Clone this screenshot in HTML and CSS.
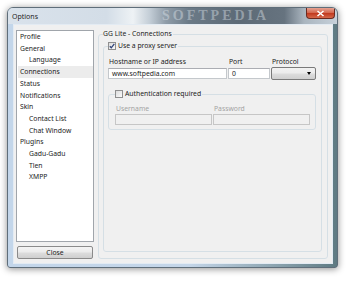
FILE: index.html
```html
<!DOCTYPE html>
<html lang="en">
<head>
  <meta charset="UTF-8">
  <meta name="viewport" content="width=device-width, initial-scale=1.0">
  <title>Options</title>
  <link rel="stylesheet" href="styles.css">
</head>
<body>
  <div class="window">
    <div class="titlebar">
      <span class="title">Options</span>
      <span class="watermark">SOFTPEDIA</span>
      <span class="close-x">
        <svg width="9" height="7" viewBox="0 0 9 7"><path d="M1.5 1 L7.5 6 M7.5 1 L1.5 6" stroke="#fff" stroke-width="1.6"/></svg>
      </span>
    </div>

    <div class="client">
      <div class="sidebar">
        <ul class="nav">
          <li>Profile</li>
          <li>General</li>
          <li class="sub">Language</li>
          <li class="active">Connections</li>
          <li>Status</li>
          <li>Notifications</li>
          <li>Skin</li>
          <li class="sub">Contact List</li>
          <li class="sub">Chat Window</li>
          <li>Plugins</li>
          <li class="sub">Gadu-Gadu</li>
          <li class="sub">Tlen</li>
          <li class="sub">XMPP</li>
        </ul>
        <button class="btn">Close</button>
      </div>

      <fieldset class="page">
        <legend>GG Lite - Connections</legend>

        <fieldset class="group proxy">
          <legend class="check">
            <span class="box checked">
              <svg width="6" height="6" viewBox="0 0 6 6"><path d="M0.8 3.2 L2.3 4.8 L5.3 0.8" fill="none" stroke="#32457a" stroke-width="1.3"/></svg>
            </span>
            Use a proxy server
          </legend>

          <div class="row server">
            <div class="field">
              <span class="label">Hostname or IP address</span>
              <div class="edit">www.softpedia.com</div>
            </div>
            <div class="field">
              <span class="label">Port</span>
              <div class="edit">0</div>
            </div>
            <div class="field">
              <span class="label">Protocol</span>
              <div class="combo"><span class="arrow"></span></div>
            </div>
          </div>

          <fieldset class="group auth">
            <legend class="check">
              <span class="box"></span>
              Authentication required
            </legend>
            <div class="row login">
              <div class="field">
                <span class="label disabled">Username</span>
                <div class="edit disabled"></div>
              </div>
              <div class="field">
                <span class="label disabled">Password</span>
                <div class="edit disabled"></div>
              </div>
            </div>
          </fieldset>
        </fieldset>
      </fieldset>
    </div>
  </div>
</body>
</html>
```

FILE: styles.css
```css
* {
  box-sizing: border-box;
}
body {
  margin: 0;
  width: 350px;
  height: 281px;
  background: #fff;
  font-family: "Noto Sans", "Liberation Sans", sans-serif;
  font-size: 6.8px;
  color: #1b1b1b;
  overflow: hidden;
}
.window {
  width: 331px;
  height: 261px;
  margin: 7px 0 0 7px;
  padding-bottom: 3px;
  border: 1px solid #5f6e7a;
  border-radius: 6px 6px 3px 3px;
  background: linear-gradient(90deg, #c3d6ea 0%, #c4d6e9 55%, #8ea6b2 80%, #5e7a82 100%);
  box-shadow: 0 1px 7px rgba(0, 0, 0, 0.45);
  display: flex;
  flex-direction: column;
  overflow: hidden;
}
.titlebar {
  height: 16px;
  display: flex;
  align-items: center;
  padding-left: 4px;
  background: linear-gradient(90deg, #d9e2eb 0%, #d3dde7 30%, #eef2f5 38%, #c4ced7 43%, #8f9ca8 48%, #6b7a87 55%, #5d6a76 70%, #66737f 84%, #aab5bf 90%, #c7d1da 100%);
}
.title {
  color: #1e1e1e;
  font-size: 7px;
}
.watermark {
  margin-left: 124px;
  font-family: "Liberation Serif", serif;
  font-weight: bold;
  font-size: 14px;
  letter-spacing: 3px;
  color: rgba(225, 232, 238, 0.42);
}
.close-x {
  margin-left: auto;
  margin-right: 2px;
  align-self: flex-start;
  width: 29px;
  height: 11px;
  border: 1px solid #6b2a20;
  border-top: none;
  border-radius: 0 0 4px 4px;
  background: linear-gradient(#e6a393 0%, #d56a52 45%, #c23b20 55%, #d5684a 100%);
  display: flex;
  align-items: center;
  justify-content: center;
}
.client {
  flex: 1;
  margin: 0 4px 0 5px;
  padding: 4px 4px 4px 2px;
  border: 1px solid #e3ebf3;
  background: #f0f0f0;
  display: flex;
  gap: 4px;
}
.sidebar {
  width: 78px;
  margin-top: 1px;
  display: flex;
  flex-direction: column;
  gap: 4px;
}
.nav {
  flex: 1;
  list-style: none;
  margin: 0;
  padding: 0 0 0 1px;
  background: #fff;
  border: 1px solid #a0a5ab;
}
.nav li {
  line-height: 11.7px;
  padding-left: 2px;
}
.nav li.sub {
  padding-left: 11px;
}
.nav li.active {
  background: #ececec;
}
.btn {
  height: 13px;
  margin: 0 1px;
  padding: 0;
  font: inherit;
  color: #1b1b1b;
  border: 1px solid #8a8a8a;
  border-radius: 2px;
  background: linear-gradient(#f4f4f4 0%, #ebebeb 48%, #dddddd 52%, #cfcfcf 100%);
}
fieldset {
  margin: 0;
  min-width: 0;
  border: 1px solid #d5dfe5;
  border-radius: 3px;
}
legend {
  padding: 0 1px 0 0;
  line-height: 10px;
}
.page {
  flex: 1;
  padding: 2px 5px 6px 4px;
  display: flex;
  flex-direction: column;
}
.group.proxy {
  flex: 1;
  padding: 6px 5px 0 4px;
}
.check {
  display: flex;
  align-items: center;
  gap: 2px;
}
.box {
  width: 8px;
  height: 8px;
  border: 1px solid #8f8f8f;
  background: linear-gradient(135deg, #dcdcdc, #fbfbfb);
  display: flex;
  align-items: center;
  justify-content: center;
}
.row {
  display: grid;
  column-gap: 1px;
}
.server {
  grid-template-columns: 119px 42px 1fr;
}
.login {
  grid-template-columns: 1fr 1fr;
}
.field {
  display: flex;
  flex-direction: column;
  gap: 2px;
}
.label {
  line-height: 9px;
  padding-left: 1px;
}
.label.disabled {
  color: #a3a3a3;
}
.edit {
  height: 11px;
  line-height: 9px;
  padding-left: 3px;
  background: #fff;
  border: 1px solid #c4c8cc;
  border-top-color: #abadb3;
}
.edit.disabled {
  background: #f0f0f0;
  border-color: #c6c6c6;
}
.combo {
  height: 13px;
  margin-top: -1px;
  border: 1px solid #7a7a7a;
  border-radius: 2px;
  background: linear-gradient(#f2f2f2 0%, #ebebeb 48%, #dddddd 52%, #cfcfcf 100%);
  display: flex;
  align-items: center;
  justify-content: flex-end;
  padding-right: 4px;
}
.arrow {
  border-left: 2.5px solid transparent;
  border-right: 2.5px solid transparent;
  border-top: 3px solid #000;
}
.group.auth {
  margin-top: 9px;
  padding: 5px 5px 4px 6px;
}
.login .field {
  gap: 1px;
}
```
